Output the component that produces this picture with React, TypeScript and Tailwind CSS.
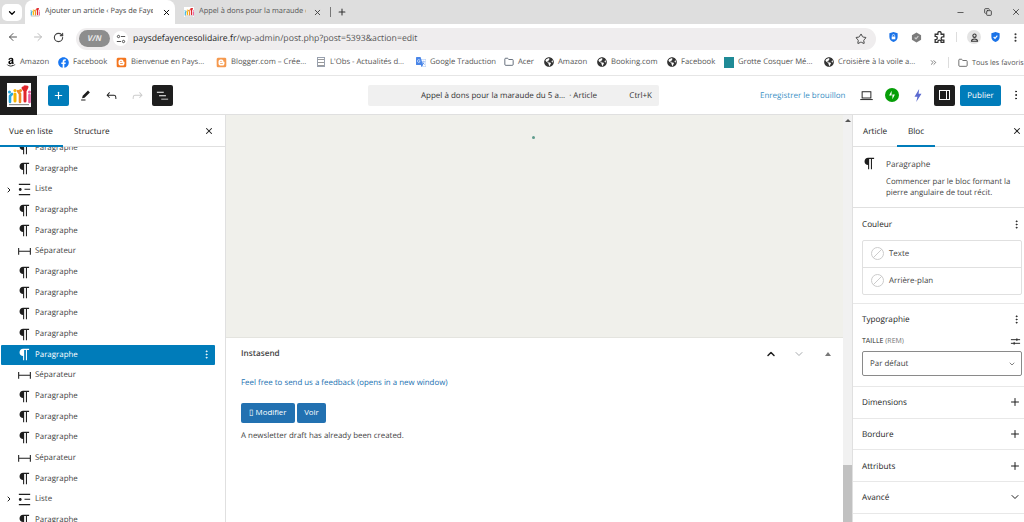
import { ArrowLeft, ArrowRight, ChevronDown, ChevronRight, ChevronUp, ChevronsRight, EllipsisVertical, Folder, Minus, Plus, RotateCw, Star, X, Copy } from 'lucide-react';
import { FaAmazon, FaBlogger, FaFacebook, FaGlobeAmericas } from 'react-icons/fa';
import { SiGoogletranslate } from 'react-icons/si';

// Block icons (same 24x24 grid as the editor)
function WpIcon({ d, className }: { d: string; className?: string }) {
  return (
    <svg viewBox="0 0 24 24" fill="currentColor" className={className}>
      <path d={d} />
    </svg>
  );
}

const paragraphIcon = 'm9.99609 14v-.2251l.00391.0001v6.225h1.5v-14.5h2.5v14.5h1.5v-14.5h3v-1.5h-8.50391c-2.76142 0-5 2.23858-5 5 0 2.7614 2.23858 5 5 5z';
const listIcon = 'M4 4v1.5h16V4H4zm8 8.5h8V11h-8v1.5zM4 20h16v-1.5H4V20zm4-8c0-1.1-.9-2-2-2s-2 .9-2 2 .9 2 2 2 2-.9 2-2z';
const separatorIcon = 'M4.5 12.5v4H3V7h1.5v3.987h15V7H21v9.5h-1.5v-4h-15Z';
const pencilIcon = 'm19 7-3-3-8.5 8.5-1 4 4-1L19 7Zm-7 11.5H5V20h7v-1.5Z';
const undoIcon = 'M18.3 11.7c-.6-.6-1.4-.9-2.3-.9H6.7l2.9-3.3-1.1-1-4.5 5L8.5 16l1-1-2.7-2.7H16c.5 0 .9.2 1.3.5 1 1 1 3.4 1 4.5v.3h1.5v-.2c0-1.5 0-4.3-1.5-5.7z';
const redoIcon = 'M15.6 6.5l-1.1 1 2.9 3.3H8c-.9 0-1.7.3-2.3.9-1.4 1.5-1.4 4.2-1.4 5.6v.2h1.5v-.3c0-1.1 0-3.5 1-4.5.3-.3.7-.5 1.3-.5h9.2L14.5 15l1.1 1.1 4.6-4.6-4.6-5z';
const listViewIcon = 'M3 6h11v1.5H3V6Zm3.5 5.5h11V13h-11v-1.5ZM21 17H10v1.5h11V17Z';

// raised-hands people from the site logo
function SiteLogo({ className }: { className?: string }) {
  return (
    <svg viewBox="0 0 24 24" className={className}>
      <rect width="24" height="24" fill="#fff" />
      <g strokeLinecap="round" fill="none">
        <path d="M3 19v-6l2-2" stroke="#29a9e0" strokeWidth="2.6" />
        <circle cx="2.5" cy="9" r="1.5" fill="#29a9e0" />
        <path d="M8 18v-7" stroke="#f7b500" strokeWidth="3" />
        <circle cx="8" cy="7.5" r="1.6" fill="#f7b500" />
        <path d="M13 19v-8l-2-3" stroke="#f08a24" strokeWidth="2.6" />
        <circle cx="13.5" cy="7.5" r="1.6" fill="#f08a24" />
        <path d="M18 18V8l-2-3M18 8l2-4" stroke="#e0262b" strokeWidth="3" />
        <circle cx="18" cy="4" r="1.8" fill="#e0262b" />
        <path d="M22.5 19v-7" stroke="#e85c9c" strokeWidth="2.6" />
        <circle cx="22.5" cy="9" r="1.5" fill="#e85c9c" />
      </g>
      <rect x="2" y="21" width="20" height="1.2" fill="#8a8a8a" />
    </svg>
  );
}

const bookmarks = [
  { label: 'Amazon', width: 'w-[52px]', icon: <FaAmazon className="w-[10px] h-[10px] text-black" /> },
  { label: 'Facebook', width: 'w-[58px]', icon: <FaFacebook className="w-[11px] h-[11px] text-[#1877f2]" /> },
  { label: 'Bienvenue en Pays...', width: 'w-[100px]', icon: <FaBlogger className="w-[11px] h-[11px] text-[#f4761f]" /> },
  { label: 'Blogger.com – Crée...', width: 'w-[100px]', icon: <FaBlogger className="w-[11px] h-[11px] text-[#f5994e]" /> },
  { label: "L'Obs - Actualités d...", width: 'w-[100px]', icon: <span className="w-[8px] h-[10px] mx-px border border-gray-400 bg-[repeating-linear-gradient(0deg,#999_0_1px,#fff_1px_3px)]" /> },
  { label: 'Google Traduction', width: 'w-[88px]', icon: <SiGoogletranslate className="w-[10px] h-[10px] text-[#4a86e8]" /> },
  { label: 'Acer', width: 'w-[40px]', icon: <Folder className="w-[10px] h-[10px] text-gray-600" /> },
  { label: 'Amazon', width: 'w-[53px]', icon: <FaGlobeAmericas className="w-[10px] h-[10px] text-[#333]" /> },
  { label: 'Booking.com', width: 'w-[70px]', icon: <FaGlobeAmericas className="w-[10px] h-[10px] text-[#333]" /> },
  { label: 'Facebook', width: 'w-[57px]', icon: <FaGlobeAmericas className="w-[10px] h-[10px] text-[#333]" /> },
  { label: 'Grotte Cosquer Mé...', width: 'w-[100px]', icon: <span className="w-[10px] h-[11px] bg-[#1f8a96]" /> },
  { label: 'Croisière à la voile a...', width: 'w-[100px]', icon: <FaGlobeAmericas className="w-[10px] h-[10px] text-[#333]" /> },
];

type BlockKind = 'paragraph' | 'list' | 'separator';

const blocks: { kind: BlockKind; selected?: boolean }[] = [
  { kind: 'paragraph' },
  { kind: 'paragraph' },
  { kind: 'list' },
  { kind: 'paragraph' },
  { kind: 'paragraph' },
  { kind: 'separator' },
  { kind: 'paragraph' },
  { kind: 'paragraph' },
  { kind: 'paragraph' },
  { kind: 'paragraph' },
  { kind: 'paragraph', selected: true },
  { kind: 'separator' },
  { kind: 'paragraph' },
  { kind: 'paragraph' },
  { kind: 'paragraph' },
  { kind: 'separator' },
  { kind: 'paragraph' },
  { kind: 'list' },
  { kind: 'paragraph' },
];

const blockLabel = { paragraph: 'Paragraphe', list: 'Liste', separator: 'Séparateur' };
const blockIcon = { paragraph: paragraphIcon, list: listIcon, separator: separatorIcon };

function BrowserTabs() {
  return (
    <div className="h-[24px] bg-[#dedede] flex items-end text-[7.4px] text-[#444]">
      <div className="w-[20px] h-[17px] mb-[3px] ml-[2px] bg-white rounded-[5px] flex items-center justify-center">
        <ChevronDown className="w-[10px] h-[10px] text-black" strokeWidth={3} />
      </div>
      <div className="w-[150px] h-[24px] ml-[3px] bg-white rounded-t-[8px] flex items-center pl-[5px]">
        <SiteLogo className="w-[10px] h-[10px]" />
        <span className="ml-[5px] w-[108px] whitespace-nowrap overflow-hidden">Ajouter un article ‹ Pays de Faye</span>
        <X className="w-[9px] h-[9px] text-black ml-[9px]" strokeWidth={2.5} />
      </div>
      <div className="w-[150px] h-[24px] flex items-center pl-[9px] text-[#555]">
        <SiteLogo className="w-[10px] h-[10px]" />
        <span className="ml-[5px] w-[107px] whitespace-nowrap overflow-hidden">Appel à dons pour la maraude d</span>
        <X className="w-[9px] h-[9px] text-[#444] ml-[7px]" strokeWidth={2.5} />
      </div>
      <div className="w-px h-[10px] mb-[7px] bg-[#777] ml-[5px]" />
      <Plus className="w-[10px] h-[10px] mb-[7px] ml-[6px] text-[#333]" strokeWidth={2.5} />
      <div className="ml-auto flex items-center gap-[19px] h-[24px] pr-[3px]">
        <Minus className="w-[9px] h-[9px] text-[#333]" />
        <Copy className="w-[8px] h-[8px] text-[#333]" strokeWidth={2.5} />
        <X className="w-[10px] h-[10px] text-[#333]" />
      </div>
    </div>
  );
}

function AddressBar() {
  return (
    <div className="h-[26px] bg-white flex items-center text-[#555]">
      <ArrowLeft className="w-[12px] h-[12px] ml-[7px] text-[#555]" />
      <ArrowRight className="w-[12px] h-[12px] ml-[13px] text-[#bbb]" />
      <RotateCw className="w-[11px] h-[11px] ml-[9px] text-[#444]" strokeWidth={2.5} />
      <div className="w-[800px] h-[22px] ml-[12px] mt-[3px] bg-[#efedee] rounded-full flex items-center">
        <div className="w-[31px] h-[17px] ml-[3px] rounded-full bg-[#8d8d8d] text-[#e8e8e8] text-[8px] font-bold flex items-center justify-center italic">V/N</div>
        <div className="w-[15px] h-[15px] ml-[3px] rounded-full bg-white flex items-center justify-center">
          <svg viewBox="0 0 12 12" fill="none" stroke="#333" strokeWidth="1" className="w-[10px] h-[10px]">
            <circle cx="3" cy="3" r="1.4" />
            <path d="M6 3h5M1 9h5" />
            <circle cx="9" cy="9" r="1.4" />
          </svg>
        </div>
        <span className="ml-[5px] pt-px text-[8.7px] text-[#222]">
          paysdefayencesolidaire.fr<span className="text-[#555]">/wp-admin/post.php?post=5393&amp;action=edit</span>
        </span>
        <Star className="w-[12px] h-[12px] ml-auto mr-[9px] text-[#444]" />
      </div>
      <svg viewBox="0 0 24 24" className="w-[11px] h-[12px] ml-[12px]">
        <path d="M12 1 3 4v8c0 6 4 9 9 11 5-2 9-5 9-11V4z" fill="#1a73e8" />
        <rect x="8" y="11" width="8" height="6" fill="#fff" />
        <path d="M9.5 11V9a2.5 2.5 0 0 1 5 0v2" stroke="#fff" strokeWidth="1.5" fill="none" />
      </svg>
      <svg viewBox="0 0 24 24" className="w-[11px] h-[11px] ml-[12px]">
        <path d="M12 1 22 7v10l-10 6L2 17V7z" fill="#7b7b7b" />
        <path d="m8 12 3 3 5-6" stroke="#ccc" strokeWidth="2.5" fill="none" />
      </svg>
      <svg viewBox="0 0 24 24" fill="none" stroke="#333" strokeWidth="2.4" className="w-[13px] h-[13px] ml-[11px]">
        <path d="M9 4a3 3 0 0 1 6 0v2h5v5h-2a3 3 0 0 0 0 6h2v4h-5v-1a3 3 0 0 0-6 0v1H4v-5h1a3 3 0 0 0 0-6H4V6h5z" />
      </svg>
      <div className="w-px h-[10px] ml-[10px] bg-[#ddd]" />
      <div className="w-[14px] h-[14px] ml-[10px] rounded-full bg-[#e4e4e4] flex items-center justify-center">
        <svg viewBox="0 0 12 12" fill="none" stroke="#333" strokeWidth="1.4" className="w-[9px] h-[9px]">
          <circle cx="6" cy="3.6" r="2.2" />
          <path d="M2 11c0-4 8-4 8 0z" />
        </svg>
      </div>
      <svg viewBox="0 0 24 24" className="w-[11px] h-[12px] ml-[9px]">
        <path d="M12 1 3 4v8c0 6 4 9 9 11 5-2 9-5 9-11V4z" fill="#1a73e8" />
        <path d="m8 12 3 3 5-6" stroke="#fff" strokeWidth="2.5" fill="none" />
      </svg>
      <EllipsisVertical className="w-[11px] h-[11px] ml-[9px] text-[#333]" strokeWidth={2.5} />
    </div>
  );
}

function BookmarksBar() {
  return (
    <div className="h-[26px] bg-white flex items-center pl-[6px] border-b border-[#e6e6e6] text-[7.7px] text-[#555]">
      {bookmarks.map((b, i) => (
        <div key={i} className={`${b.width} shrink-0 flex items-center gap-[4px] whitespace-nowrap`}>
          {b.icon}
          <span className="pt-px">{b.label}</span>
        </div>
      ))}
      <ChevronsRight className="w-[9px] h-[9px] shrink-0 ml-[5px] text-[#555]" />
      <div className="w-px h-[11px] shrink-0 ml-[10px] bg-[#ddd]" />
      <Folder className="w-[10px] h-[10px] shrink-0 ml-[9px] text-[#555]" />
      <span className="ml-[4px] pt-px text-[7.2px] whitespace-nowrap">Tous les favoris</span>
    </div>
  );
}

function EditorHeader() {
  return (
    <div className="h-[39px] bg-white border-b border-[#e0e0e0] flex items-center text-[#1e1e1e]">
      <div className="w-[37px] h-[39px] bg-[#1e1e1e] flex items-center justify-center">
        <SiteLogo className="w-[24px] h-[24px]" />
      </div>
      <div className="w-[21px] h-[21px] ml-[11px] bg-[#007cba] rounded-[2px] flex items-center justify-center">
        <Plus className="w-[11px] h-[11px] text-white" strokeWidth={2.5} />
      </div>
      <WpIcon d={pencilIcon} className="w-[15px] h-[15px] ml-[9px]" />
      <WpIcon d={undoIcon} className="w-[15px] h-[15px] ml-[11px]" />
      <WpIcon d={redoIcon} className="w-[15px] h-[15px] ml-[11px] text-[#ccc]" />
      <div className="w-[21px] h-[21px] ml-[7px] bg-[#1e1e1e] rounded-[2px] flex items-center justify-center">
        <WpIcon d={listViewIcon} className="w-[15px] h-[15px] text-white" />
      </div>
      <div className="w-[291px] h-[21px] shrink-0 ml-[195px] bg-[#f0f0f0] rounded-[2px] flex items-center pt-[2px] text-[8px] text-[#333] whitespace-nowrap">
        <span className="ml-[53px]">Appel à dons pour la maraude du 5 a...</span>
        <span className="ml-[4px]">· Article</span>
        <span className="ml-auto mr-[7px]">Ctrl+K</span>
      </div>
      <span className="w-[84px] shrink-0 ml-[101px] pt-[2px] text-[8px] text-[#3a8fc4] whitespace-nowrap">Enregistrer le brouillon</span>
      <svg viewBox="0 0 24 24" fill="none" stroke="#1e1e1e" strokeWidth="1.5" className="w-[15px] h-[15px] ml-[15px]">
        <rect x="5" y="6" width="14" height="10" />
        <path d="M2 18.5h20" />
      </svg>
      <div className="w-[14px] h-[14px] ml-[11px] rounded-full bg-[#069e08] flex items-center justify-center">
        <svg viewBox="0 0 24 24" className="w-[10px] h-[10px]" fill="#fff">
          <path d="M11 2 5 13h6zM13 22l6-11h-6z" />
        </svg>
      </div>
      <svg viewBox="0 0 24 24" className="w-[14px] h-[15px] ml-[12px]" fill="#5b6ad0">
        <path d="M14 1 6 14h5l-2 9 9-14h-5z" />
      </svg>
      <div className="w-[21px] h-[21px] ml-[9px] bg-[#1e1e1e] rounded-[2px] flex items-center justify-center">
        <div className="w-[11px] h-[10px] border border-white flex justify-end">
          <div className="w-[3px] border-l border-white" />
        </div>
      </div>
      <div className="w-[41px] h-[21px] ml-[5px] pt-[2px] bg-[#007cba] rounded-[2px] text-white text-[8px] flex items-center justify-center">Publier</div>
      <EllipsisVertical className="w-[12px] h-[12px] ml-[9px]" />
    </div>
  );
}

function ListRow({ kind, selected }: { kind: BlockKind; selected?: boolean }) {
  return (
    <div className={`h-[20.67px] w-[214px] ml-px flex items-center rounded-[1px] relative ${selected ? 'bg-[#007cba] text-white' : 'text-[#444]'}`}>
      {kind === 'list' && <ChevronRight className="absolute left-[4px] w-[8px] h-[8px] text-[#1e1e1e]" strokeWidth={3} />}
      <WpIcon d={blockIcon[kind]} className={`w-[17px] h-[17px] ml-[15px] ${selected ? 'text-white' : 'text-[#1e1e1e]'}`} />
      <span className="ml-[2px] pt-[1.5px] text-[7.9px]">{blockLabel[kind]}</span>
      {selected && <EllipsisVertical className="ml-auto mr-[3px] w-[11px] h-[11px]" />}
    </div>
  );
}

function ListView() {
  return (
    <aside className="w-[226px] shrink-0 bg-white border-r border-[#e0e0e0] flex flex-col overflow-hidden">
      <div className="h-[32px] shrink-0 border-b border-[#e0e0e0] flex items-stretch text-[8.2px] font-medium text-[#1e1e1e] relative z-10 bg-white">
        <div className="w-[63px] border-b-2 border-[#007cba] h-[32px] pl-[9px] pt-[11px]">Vue en liste</div>
        <div className="ml-[11px] pt-[11px]">Structure</div>
        <X className="w-[10px] h-[10px] ml-auto mr-[11px] mt-[11px]" strokeWidth={2.5} />
      </div>
      <div className="-mt-[9px]">
        {blocks.map((b, i) => (
          <ListRow key={i} kind={b.kind} selected={b.selected} />
        ))}
      </div>
    </aside>
  );
}

function Canvas() {
  return (
    <main className="flex-1 flex flex-col min-w-0">
      <div className="h-[223px] bg-[#f0f0eb] border-b border-[#e4e4df] flex justify-center pt-[21px]">
        <div className="w-[3px] h-[3px] rounded-full bg-[#5f9c8c] -translate-x-[1px]" />
      </div>
      <div className="flex-1 bg-white pl-[15px] pr-[12px] text-[7.9px] text-[#444]">
        <div className="h-[31px] flex items-center">
          <span className="pt-[1.5px] text-[8.2px] font-semibold text-[#444]">Instasend</span>
          <ChevronUp className="w-[12px] h-[12px] ml-auto text-[#1e1e1e]" strokeWidth={3} />
          <ChevronDown className="w-[12px] h-[12px] ml-[16px] text-[#a7aaad]" strokeWidth={2} />
          <div className="ml-[20px] w-0 h-0 border-x-[3px] border-x-transparent border-b-[4px] border-b-[#777]" />
        </div>
        <a className="block mt-[9px] text-[#2271b1]">Feel free to send us a feedback (opens in a new window)</a>
        <div className="flex gap-[2px] mt-[13px]">
          <button className="w-[54px] h-[20px] bg-[#2271b1] rounded-[2px] text-white text-[7.9px]">▯ Modifier</button>
          <button className="w-[29px] h-[20px] bg-[#2271b1] rounded-[2px] text-white text-[7.9px]">Voir</button>
        </div>
        <p className="mt-[8px]">A newsletter draft has already been created.</p>
      </div>
    </main>
  );
}

function Scrollbar() {
  return (
    <div className="w-[9px] shrink-0 bg-[#f1f1f1] flex flex-col items-center">
      <div className="mt-[4px] w-0 h-0 border-x-[3px] border-x-transparent border-b-[3px] border-b-[#555]" />
      <div className="mt-auto w-full h-[57px] bg-[#c1c1c1]" />
    </div>
  );
}

function CollapsedPanel({ title, icon }: { title: string; icon: 'plus' | 'chevron' }) {
  return (
    <div className="h-[31.7px] border-b border-[#e8e8e8] flex items-center justify-between pl-[9px] pr-[3px] text-[8.2px] font-medium text-[#1e1e1e]">
      <span className="pt-[2px]">{title}</span>
      {icon === 'plus' ? <Plus className="w-[12px] h-[12px]" /> : <ChevronDown className="w-[12px] h-[12px]" />}
    </div>
  );
}

function ColorRow({ label, bordered }: { label: string; bordered?: boolean }) {
  return (
    <div className={`h-[26.5px] flex items-center pl-[8px] ${bordered ? 'border-b border-[#e0e0e0]' : ''}`}>
      <span className="w-[13px] h-[13px] rounded-full border border-[#ccc] bg-[linear-gradient(135deg,transparent_47%,#ccc_47%,#ccc_53%,transparent_53%)]" />
      <span className="ml-[5px] pt-[1.5px] text-[7.9px] text-[#444]">{label}</span>
    </div>
  );
}

function Inspector() {
  return (
    <aside className="w-[172px] shrink-0 bg-white border-l border-[#e0e0e0] text-[#1e1e1e] overflow-hidden">
      <div className="h-[32px] border-b border-[#e0e0e0] flex items-stretch text-[8.2px] font-medium">
        <div className="w-[44px] pl-[10px] pt-[11px]">Article</div>
        <div className="w-[38px] h-[32px] border-b-2 border-[#007cba] text-center pt-[11px]">Bloc</div>
        <X className="w-[10px] h-[10px] ml-auto mr-[2px] mt-[11px]" strokeWidth={2.5} />
      </div>
      <div className="h-[61px] border-b border-[#e0e0e0] flex pl-[8px] pt-[8px]">
        <WpIcon d={paragraphIcon} className="w-[17px] h-[17px] shrink-0" />
        <div className="ml-[8px] mt-[1.5px] text-[#444]">
          <div className="text-[8.2px] font-medium leading-[15px]">Paragraphe</div>
          <div className="text-[7.8px] leading-[11px] mt-[5px] w-[135px]">Commencer par le bloc formant la pierre angulaire de tout récit.</div>
        </div>
      </div>
      <div className="h-[96px] border-b border-[#e8e8e8] pl-[9px] pr-[2px]">
        <div className="h-[32px] flex items-center justify-between text-[8.2px] font-medium">
          <span className="pt-[1.5px]">Couleur</span>
          <EllipsisVertical className="w-[11px] h-[11px]" />
        </div>
        <div className="border border-[#e0e0e0] rounded-[2px]">
          <ColorRow label="Texte" bordered />
          <ColorRow label="Arrière-plan" />
        </div>
      </div>
      <div className="h-[83px] border-b border-[#e8e8e8] pl-[9px] pr-[2px]">
        <div className="h-[31px] flex items-center justify-between text-[8.2px] font-medium">
          <span className="pt-[1.5px]">Typographie</span>
          <EllipsisVertical className="w-[11px] h-[11px]" />
        </div>
        <div className="h-[12px] flex items-center justify-between text-[7px] font-medium">
          <span className="pt-[1.5px]">TAILLE <span className="font-normal text-[#757575]">(REM)</span></span>
          <svg viewBox="0 0 24 24" fill="none" stroke="#1e1e1e" strokeWidth="2" className="w-[11px] h-[11px] mr-[1px]">
            <path d="M2 8h20M2 16h20" />
            <path d="M15 5v6M9 13v6" />
          </svg>
        </div>
        <div className="h-[25px] mt-[4px] border border-[#8a8a8a] rounded-[2px] flex items-center justify-between pl-[7px] pr-[5px] text-[7.9px] text-[#444]">
          <span className="pt-[2px]">Par défaut</span>
          <ChevronDown className="w-[8px] h-[8px]" />
        </div>
      </div>
      <CollapsedPanel title="Dimensions" icon="plus" />
      <CollapsedPanel title="Bordure" icon="plus" />
      <CollapsedPanel title="Attributs" icon="plus" />
      <CollapsedPanel title="Avancé" icon="chevron" />
    </aside>
  );
}

export default function App() {
  return (
    <div className="w-[1024px] h-[522px] overflow-hidden flex flex-col bg-white font-['Open_Sans',sans-serif] [text-rendering:geometricPrecision]">
      <BrowserTabs />
      <AddressBar />
      <BookmarksBar />
      <EditorHeader />
      <div className="flex-1 flex min-h-0">
        <ListView />
        <Canvas />
        <Scrollbar />
        <Inspector />
      </div>
    </div>
  );
}
